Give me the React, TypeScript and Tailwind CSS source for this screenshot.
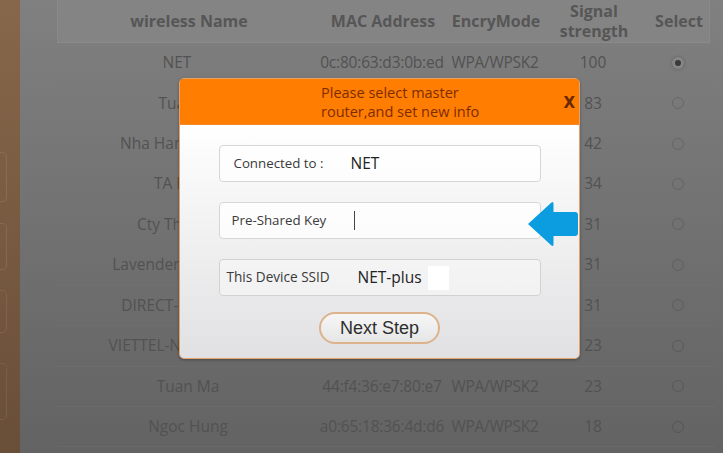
import React from "react";

const rows = [
  { name: "NET", mac: "0c:80:63:d3:0b:ed", enc: "WPA/WPSK2", sig: "100", sel: true, cls: "text-center pr-[22px]" },
  { name: "Tuan Vu", mac: "", enc: "", sig: "83" },
  { name: "Nha Hang Hoa Sen", mac: "", enc: "", sig: "42" },
  { name: "TA HUNG", mac: "", enc: "", sig: "34" },
  { name: "Cty Thanh Dat", mac: "", enc: "", sig: "31" },
  { name: "Lavender Cafe", mac: "", enc: "", sig: "31", cls: "text-center pr-[48px]" },
  { name: "DIRECT-5C-BRAVIA", mac: "", enc: "", sig: "31" },
  { name: "VIETTEL-NGUYEN VAN", mac: "", enc: "", sig: "23" },
  { name: "Tuan Ma", mac: "44:f4:36:e7:80:e7", enc: "WPA/WPSK2", sig: "23" },
  { name: "Ngoc Hung", mac: "a0:65:18:36:4d:d6", enc: "WPA/WPSK2", sig: "18" },
];

function Radio({ sel }: { sel?: boolean }) {
  return sel ? (
    <span className="w-[12px] h-[12px] rounded-full bg-[#868686] flex items-center justify-center shadow-[0_0_3px_rgba(60,60,60,0.5)]">
      <span className="w-[6px] h-[6px] rounded-full bg-[#3a3a3a]" />
    </span>
  ) : (
    <span className="w-[12px] h-[12px] rounded-full border border-black/15" />
  );
}

export default function App() {
  return (
    <div className="relative w-[723px] h-[453px] overflow-hidden flex font-['Open_Sans',sans-serif]">
      <aside className="w-[20px] shrink-0 bg-gradient-to-b from-[#87674b] to-[#694e38] flex flex-col">
        <div className="h-[152px]" />
        <div className="h-[50px] w-[7px] rounded-r-[5px] border border-l-0 border-[#8c6c50]" />
        <div className="h-[21px]" />
        <div className="h-[47px] w-[7px] rounded-r-[5px] border border-l-0 border-[#87684c]" />
        <div className="h-[20px]" />
        <div className="h-[43px] w-[7px] rounded-r-[5px] border border-l-0 border-[#826349]" />
        <div className="h-[30px]" />
        <div className="h-[57px] w-[7px] rounded-r-[5px] border border-l-0 border-[#7c5e45]" />
      </aside>
      <main className="flex-1 bg-gradient-to-b from-[#808080] to-[#636363]">
        <div className="ml-[37px] w-[658px]">
          <div className="w-[653px] h-[43px] bg-[#848484] border-x border-b border-[#8a8a8a] grid grid-cols-[262px_126px_100px_96px_69px] items-center text-[16px] font-bold text-[#565656] leading-[20px]">
            <div className="text-center">wireless Name</div>
            <div className="text-center">MAC Address</div>
            <div className="text-center">EncryMode</div>
            <div className="text-center">Signal<br />strength</div>
            <div className="text-center pl-[5px]">Select</div>
          </div>
          {rows.map((r, i) => (
            <div
              key={i}
              className="h-[40.45px] grid grid-cols-[262px_126px_100px_96px_74px] items-center text-[15.5px] text-[#525252] border-b border-[#777777]/30 whitespace-nowrap"
            >
              <div className={r.cls ?? "text-center"}>{r.name}</div>
              <div className="text-center tracking-[-0.2px]">{r.mac}</div>
              <div className="text-center tracking-[-0.3px]">{r.enc}</div>
              <div className="text-center">{r.sig}</div>
              <div className="flex justify-center">
                <Radio sel={r.sel} />
              </div>
            </div>
          ))}
        </div>
      </main>

      {/* modal */}
      <div className="absolute left-[179px] top-[78px] w-[401px] h-[281px] rounded-[5px] border border-[#e2a26a] overflow-hidden flex flex-col shadow-[0_1px_3px_rgba(0,0,0,0.3)]">
        <div className="h-[46px] shrink-0 bg-[#ff7d00] border-b border-[#f08a2a] relative flex items-center">
          <div className="pl-[141px] text-[14.5px] leading-[19px] text-[#7d2c00]">
            <div>Please select master</div>
            <div>router,and set new info</div>
          </div>
          <span className="absolute right-[4px] top-[13px] text-[15px] font-bold text-[#6a2800] font-['DejaVu_Sans',sans-serif]">X</span>
        </div>
        <div className="flex-1 bg-gradient-to-b from-[#ffffff] to-[#e1e1e3] flex flex-col items-center pt-[20px] gap-[20px]">
          <div className="w-[322px] h-[37px] rounded-[4px] border border-[#d6d6d6] bg-white/70 flex items-center pl-[14px]">
            <span className="w-[117px] text-[13.3px] text-[#3a3a3a]">Connected to :</span>
            <span className="text-[15.5px] text-[#222]">NET</span>
          </div>
          <div className="w-[322px] h-[37px] rounded-[4px] border border-[#d6d6d6] bg-white/80 flex items-center pl-[12px]">
            <span className="w-[122px] text-[13.3px] text-[#3a3a3a]">Pre-Shared Key</span>
            <span className="w-px h-[19px] bg-[#444]" />
          </div>
          <div className="w-[322px] h-[37px] rounded-[4px] border border-[#d2d2d2] bg-white/40 flex items-center pl-[7px]">
            <span className="w-[131px] text-[13.6px] text-[#3a3a3a]">This Device SSID</span>
            <span className="text-[15.5px] text-[#222]">NET-plus</span>
            <span className="ml-[6px] w-[21px] h-[24px] bg-white" />
          </div>
          <button className="-mt-[4px] w-[121px] h-[32px] rounded-full border-2 border-[#dcb38c] bg-gradient-to-b from-[#f6f6f6] to-[#e6e6e6] text-[18px] text-[#2e2e2e] font-['Liberation_Sans',sans-serif] flex items-center justify-center">
            Next Step
          </button>
        </div>
      </div>

      {/* arrow */}
      <svg className="absolute left-[526px] top-[200px]" width="54" height="48" viewBox="0 0 54 48">
        <path
          d="M2 24 L25.5 2.5 Q27.5 1 27.5 4 V12 H49 Q52 12 52 15 V33 Q52 36 49 36 H27.5 V44 Q27.5 47 25.5 45.5 Z"
          fill="#0c9ce0"
        />
      </svg>
    </div>
  );
}
